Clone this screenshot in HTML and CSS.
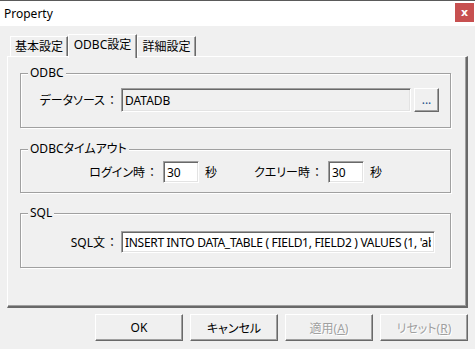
FILE: index.html
```html
<!DOCTYPE html>
<html lang="ja">
<head>
    <meta charset="UTF-8">
    <title>Property</title>
    <link rel="stylesheet" href="styles.css">
</head>
<body>

<div class="window">
    <div class="titlebar">
        <span class="title">Property</span>
        <button class="close-btn">x</button>
    </div>

    <div class="dialog">
        <div class="tabs">
            <div class="tab">基本設定</div>
            <div class="tab selected">ODBC設定</div>
            <div class="tab">詳細設定</div>
        </div>

        <div class="panel">
            <div class="group group-odbc">
                <span class="group-title">ODBC</span>
                <div class="row">
                    <label class="label label-main">データソース<span class="colon">：</span></label>
                    <input class="field field-readonly field-source" type="text" value="DATADB" readonly>
                    <button class="btn-browse">...</button>
                </div>
            </div>

            <div class="group group-timeout">
                <span class="group-title">ODBCタイムアウト</span>
                <div class="row">
                    <label class="label label-login">ログイン時<span class="colon">：</span></label>
                    <input class="field field-num" type="text" value="30">
                    <span class="unit">秒</span>
                    <label class="label label-query">クエリー時<span class="colon">：</span></label>
                    <input class="field field-num" type="text" value="30">
                    <span class="unit">秒</span>
                </div>
            </div>

            <div class="group group-sql">
                <span class="group-title">SQL</span>
                <div class="row">
                    <label class="label label-main">SQL文<span class="colon">：</span></label>
                    <input class="field field-sql" type="text" value="INSERT INTO DATA_TABLE ( FIELD1, FIELD2 ) VALUES (1, 'abc')">
                </div>
            </div>
        </div>

        <div class="actions">
            <button class="btn">OK</button>
            <button class="btn">キャンセル</button>
            <button class="btn" disabled>適用(<u>A</u>)</button>
            <button class="btn" disabled>リセット(<u>R</u>)</button>
        </div>
    </div>
</div>

</body>
</html>
```

FILE: styles.css
```css
* {
    box-sizing: border-box;
}

body {
    margin: 0;
    font-family: "Noto Sans", "Noto Sans CJK JP", sans-serif;
    font-size: 12px;
    color: #000;
    background-color: #f0f0f0;
}

.window {
    width: 475px;
    height: 349px;
    border-top: 1px solid #5a5a5a;
}

.titlebar {
    height: 25px;
    background-color: #fff;
    display: flex;
    justify-content: space-between;
    align-items: flex-start;
}

.title {
    padding-left: 4px;
    line-height: 25px;
}

.close-btn {
    width: 19px;
    height: 19px;
    margin-top: 2px;
    margin-right: 1px;
    padding: 0;
    border: none;
    background-color: #c75050;
    color: #fff;
    font-family: "DejaVu Sans", sans-serif;
    font-weight: bold;
    font-size: 11px;
    line-height: 17px;
}

.dialog {
    padding: 8px 7px 0 7px;
}

/* tabs */
.tabs {
    display: flex;
    align-items: flex-end;
    padding-left: 3px;
    height: 22px;
    position: relative;
    z-index: 1;
}

.tab {
    height: 20px;
    padding: 0;
    text-align: center;
    white-space: nowrap;
    line-height: 19px;
    border-top: 1px solid #fff;
    border-left: 1px solid #fff;
    border-right: 1px solid #696969;
    box-shadow: inset -1px 0 0 #a0a0a0;
}

.tab:nth-child(1) {
    width: 58px;
}

.tab:nth-child(3) {
    width: 59px;
}

.tab.selected {
    width: 69px;
    height: 24px;
    margin-bottom: -2px;
    line-height: 20px;
    background-color: #f0f0f0;
}

/* panel */
.panel {
    width: 461px;
    height: 252px;
    border-top: 1px solid #fff;
    border-left: 1px solid #fff;
    border-right: 2px solid #696969;
    border-bottom: 2px solid #696969;
    box-shadow: inset -1px -1px 0 #a0a0a0;
    padding: 16px 0 0 12px;
}

.group {
    position: relative;
    width: 431px;
    border: 1px solid #a0a0a0;
    box-shadow: 1px 1px 0 #fff, inset 1px 1px 0 #fff;
}

.group-title {
    position: absolute;
    top: -9px;
    left: 7px;
    padding: 0 2px;
    line-height: 16px;
    background-color: #f0f0f0;
    font-feature-settings: "palt";
}

.group-odbc {
    height: 55px;
    padding-top: 14px;
}

.group-timeout {
    height: 44px;
    margin-top: 21px;
    padding-top: 11px;
}

.group-sql {
    height: 55px;
    margin-top: 20px;
    padding-top: 17px;
}

.row {
    display: flex;
    align-items: center;
}

.label {
    text-align: right;
    font-feature-settings: "palt";
    white-space: nowrap;
}

.colon {
    font-feature-settings: normal;
    margin-left: 1px;
}

.label-main {
    width: 97px;
    margin-right: 3px;
}

.label-login {
    width: 137px;
    margin-right: 5px;
}

.label-query {
    width: 106px;
    margin-right: 5px;
}

.unit {
    width: 12px;
    margin-left: 6px;
}

/* inputs */
.field {
    height: 22px;
    padding: 0 3px;
    font-family: inherit;
    font-size: 12px;
    color: #000;
    background-color: #fff;
    border: 1px solid;
    border-color: #a0a0a0 #fff #fff #a0a0a0;
    box-shadow: inset 1px 1px 0 #696969, inset -1px -1px 0 #e3e3e3;
    outline: none;
}

.field-readonly {
    background-color: #f0f0f0;
}

.field-source {
    width: 290px;
    height: 24px;
}

.field-num {
    width: 36px;
}

.field-sql {
    width: 314px;
    letter-spacing: -0.3px;
}

/* buttons */
.btn-browse,
.btn {
    padding: 0;
    font-family: inherit;
    font-size: 12px;
    color: #000;
    background-color: #f0f0f0;
    border: 1px solid;
    border-color: #fff #696969 #696969 #fff;
    box-shadow: inset -1px -1px 0 #a0a0a0;
    font-feature-settings: "palt";
}

.btn-browse {
    width: 25px;
    height: 24px;
    margin-left: 3px;
    line-height: 18px;
    color: #1a4f8a;
}

.actions {
    display: flex;
    justify-content: flex-end;
    gap: 7px;
    width: 461px;
    margin-top: 6px;
}

.btn {
    width: 88px;
    height: 27px;
}

.btn:disabled {
    color: #a0a0a0;
    text-shadow: 1px 1px 0 #fff;
}
```
